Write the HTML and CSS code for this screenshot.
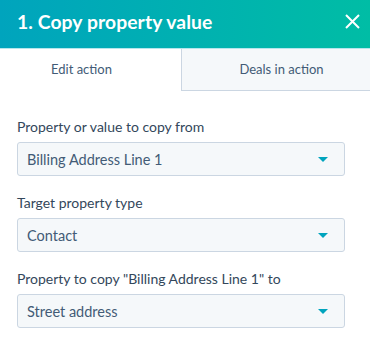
FILE: index.html
```html
<!DOCTYPE html>
<html>
<head>
<meta charset="utf-8">
<link rel="stylesheet" href="styles.css">
</head>
<body>
<div class="panel">
  <header class="header">
    <h1 class="title">1. Copy property value</h1>
    <button class="close" aria-label="Close">
      <svg width="15" height="15" viewBox="0 0 15 15"><path d="M1 1L14 14M14 1L1 14" stroke="#fff" stroke-width="2" fill="none"/></svg>
    </button>
  </header>
  <nav class="tabs">
    <div class="tab active">Edit action</div>
    <div class="tab">Deals in action</div>
  </nav>
  <div class="form">
    <div class="field">
      <label class="label">Property or value to copy from</label>
      <div class="select"><span>Billing Address Line 1</span><span class="caret"></span></div>
    </div>
    <div class="field">
      <label class="label">Target property type</label>
      <div class="select"><span>Contact</span><span class="caret"></span></div>
    </div>
    <div class="field">
      <label class="label">Property to copy "Billing Address Line 1" to</label>
      <div class="select"><span>Street address</span><span class="caret"></span></div>
    </div>
  </div>
</div>
</body>
</html>
```

FILE: styles.css
```css
* { box-sizing: border-box; }
html, body { margin: 0; padding: 0; background: #fff; }
body { font-family: Lato, "Noto Sans", sans-serif; color: #33475b; width: 370px; height: 354px; overflow: hidden; }
.panel { display: flex; flex-direction: column; }
.header {
  height: 49px;
  background: linear-gradient(to right, #00a4bd, #00bda5);
  border-bottom: 1px solid #b5e6ec;
  display: flex;
  align-items: center;
  justify-content: space-between;
  padding: 0 10px 6px 17px;
}
.title { margin: 0; color: #fff; font-size: 19.3px; font-weight: 700; letter-spacing: 0.1px; }
.close { background: none; border: 0; padding: 0; width: 15px; height: 15px; display: flex; }
.tabs { display: flex; height: 42px; }
.tab {
  display: flex; align-items: center; justify-content: center;
  font-size: 13px; font-weight: 400; color: #425b76; padding-bottom: 2px;
}
.tab.active { width: 181px; background: #fff; padding-right: 18px; }
.tab:not(.active) { flex: 1; background: #f5f8fa; border-left: 1px solid #cbd6e2; border-bottom: 1px solid #cbd6e2; padding-left: 11px; }
.form { padding: 27px 25px 0 17px; display: flex; flex-direction: column; gap: 18px; }
.field { display: flex; flex-direction: column; gap: 7px; }
.label { font-size: 14px; font-weight: 400; color: #33475b; line-height: 17px; }
.select {
  height: 34px;
  background: #f5f8fa;
  border: 1px solid #cbd6e2;
  border-radius: 3px;
  display: flex; align-items: center; justify-content: space-between;
  padding: 0 16px 0 9px;
  font-size: 14.5px; color: #425b76;
}
.caret { width: 0; height: 0; border-left: 5px solid transparent; border-right: 5px solid transparent; border-top: 5px solid #00a4bd; }
```
